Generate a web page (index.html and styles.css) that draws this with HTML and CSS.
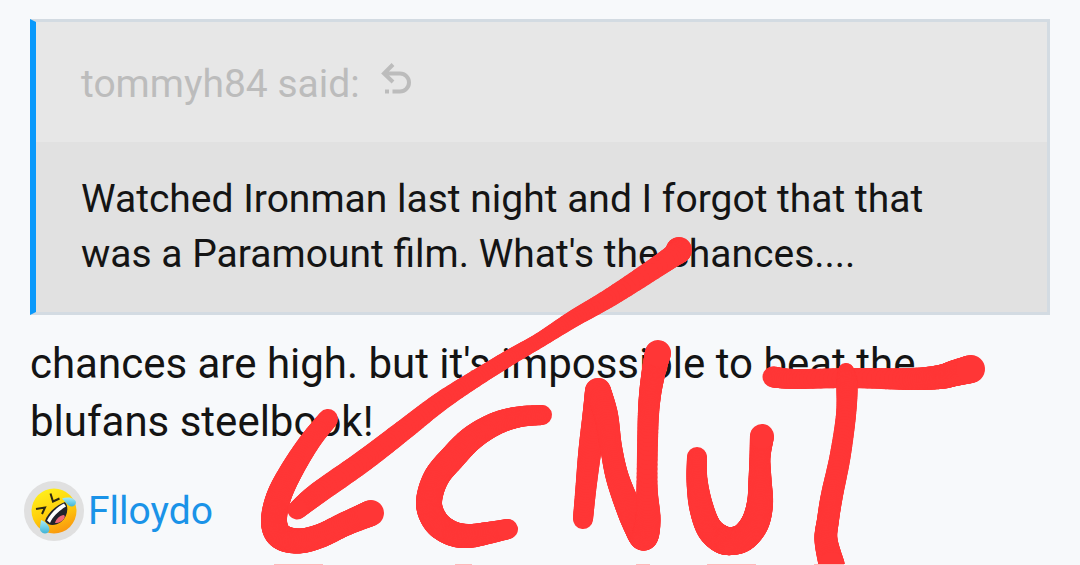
FILE: index.html
```
<!DOCTYPE html>
<html lang="en">
<head>
    <meta charset="UTF-8">
    <meta name="viewport" content="width=device-width, initial-scale=1.0">
    <title>Forum post</title>
    <link rel="stylesheet" href="styles.css">
</head>
<body>
    <article class="post">
        <blockquote class="quote">
            <div class="quote-title">
                <a href="#source">tommyh84 said:
                    <svg class="quote-icon" viewBox="0 0 30 34" aria-hidden="true">
                        <path d="M12 1.5 L3 10.5 L12 19 M3.5 10.5 H19 A9 9 0 0 1 19 28.5 H11.5"/>
                        <path class="dot" d="M4 26.5 H8 V30.5 H4 Z"/>
                    </svg>
                </a>
            </div>
            <div class="quote-content">Watched Ironman last night and I forgot that that was a Paramount film. What's the chances....</div>
        </blockquote>

        <p class="message">chances are high. but it's impossible to beat the blufans steelbook!</p>

        <div class="reactions">
            <span class="reaction-icon">
                <svg viewBox="0 0 60 60" aria-hidden="true">
                    <defs>
                        <linearGradient id="face" x1="0.3" y1="0" x2="0.7" y2="1">
                            <stop offset="0" stop-color="#fff01c"/>
                            <stop offset="0.5" stop-color="#ffd00b"/>
                            <stop offset="1" stop-color="#f9930f"/>
                        </linearGradient>
                        <linearGradient id="tear" x1="0" y1="0" x2="0" y2="1">
                            <stop offset="0" stop-color="#a5ecfb"/>
                            <stop offset="1" stop-color="#41b4d6"/>
                        </linearGradient>
                    </defs>
                    <circle cx="30" cy="30" r="22.5" fill="url(#face)"/>
                    <path d="M26.5 12.5 L29 20.5 L35.5 17.5 M12 28 L21 26.5 L18 33" fill="none" stroke="#2c2814" stroke-width="2"/>
                    <path d="M41 21 C45 26 44 35 37 41 C31 45 24 45 21 40 C23 33 32 24 41 21 Z" fill="#20222b"/>
                    <path d="M40 22.5 L42 25.5 C36 29 29 35 26 42 L23 39.5 C26 33 33 26 40 22.5 Z" fill="#fff"/>
                    <path d="M40 34 C43 36 37 43 31 42 C32 38 36 34 40 34 Z" fill="#ee6678"/>
                    <path d="M38 17.5 C44 15 51 17 52 21 C52 26 46 27 43 23 Z" fill="url(#tear)"/>
                    <path d="M17 39 C23 41 28 48 24 51.5 C20 54 15 51 16 46 Z" fill="url(#tear)"/>
                </svg>
            </span>
            <a class="reaction-user" href="#reactions">Flloydo</a>
        </div>

        <svg class="ink" id="ink" viewBox="0 0 1080 564" aria-hidden="true"></svg>
        <svg class="ink-edge" viewBox="0 0 1080 565" aria-hidden="true">
            <path d="M274 564.5 H323 M455 564.5 H472 M636 564.5 H650 M707 564.5 H756 M814 564.5 H844"/>
        </svg>
    </article>

    <script src="ink.js"></script>
</body>
</html>
```
FILE: styles.css
```
* { margin: 0; padding: 0; box-sizing: border-box; }
body { font-family: Roboto, "Liberation Sans", sans-serif; background: #f7f9fb; color: #141414; }
a { color: inherit; text-decoration: none; }

.post { position: relative; padding: 19px 30px 24px; overflow: hidden; }

.quote { background: #e1e1e1; border: 3px solid #d3dbe2; border-left: 6px solid #0a99fb; font-size: 39px; line-height: 55px; }
.quote-title { padding: 35px 45px 30px; background: #e7e7e7; color: #bcbcbc; }
.quote-content { padding: 30px 45px; }
.quote-icon { width: 30px; height: 34px; margin-left: 12px; fill: none; stroke: #bcbcbc; stroke-width: 4; }
.quote-icon .dot { fill: #bcbcbc; stroke: none; }

.message { margin-top: 20px; font-size: 42px; line-height: 58px; }

.reactions { display: flex; align-items: center; gap: 4px; margin: 30px 0 0 -6px; font-size: 39px; color: #1a93e8; }
.reaction-icon { width: 60px; height: 60px; border-radius: 50%; background: #e0e0e0; }
.reaction-icon svg { display: block; }

/* pen scribble over the post */
.ink, .ink-edge { position: absolute; top: 0; left: 0; width: 1080px; fill: none; pointer-events: none; }
.ink { height: 564px; stroke: #ff3636; stroke-linecap: round; }
.ink-edge { height: 565px; stroke: #ffb9b9; }
```
FILE: ink.js
```
// Pen strokes, each point is [x, y, pen width]
const strokes = [
    [[679, 250, 26], [670, 258, 22], [614, 295, 19], [573, 319, 17], [540, 340, 15], [509, 358, 16], [475, 379, 17], [440, 402, 19], [400, 433, 21], [362, 462, 22], [318, 493, 22], [297, 510, 19]],
    [[328, 419, 20], [311, 440, 21], [293, 468, 23], [279, 496, 25], [274, 521, 26], [280, 536, 26], [298, 541, 25], [320, 536, 24], [345, 524, 24], [371, 513, 26]],
    [[542, 415, 20], [518, 417, 21], [495, 424, 23], [472, 438, 25], [453, 457, 26], [436, 478, 26], [429, 503, 26], [436, 522, 26], [451, 533, 25], [468, 536, 24], [488, 533, 22], [508, 529, 20]],
    [[583, 519, 20], [586, 487, 21], [590, 450, 23], [595, 415, 25], [598, 391, 26]],
    [[598, 391, 26], [606, 415, 24], [611, 447, 22], [617, 476, 23], [627, 504, 25], [636, 525, 26], [644, 537, 27], [648, 519, 25], [647, 485, 21], [648, 425, 21], [650, 395, 22], [654, 370, 24], [658, 353, 26]],
    [[697, 457, 20], [697, 480, 21], [701, 506, 24], [709, 528, 26], [721, 539, 28], [732, 541, 28], [744, 537, 28], [755, 523, 28], [760, 503, 26], [760, 480, 23], [760, 457, 21], [762, 436, 24]],
    [[773, 377, 21], [796, 379, 20], [850, 378, 20], [910, 379, 22], [940, 377, 24], [955, 373, 26], [971, 369, 28]],
    [[846, 371, 16], [847, 385, 21], [846, 415, 20], [840, 457, 21], [832, 495, 22], [828, 520, 22], [826, 540, 23], [832, 566, 26]]
];

const SVG_NS = 'http://www.w3.org/2000/svg';
const STEPS = 14;

// Catmull-Rom between b and c
function spline(a, b, c, d, t) {
    return 0.5 * (2 * b + (c - a) * t + (2 * a - 5 * b + 4 * c - d) * t * t + (3 * b - a - 3 * c + d) * t * t * t);
}

function drawStroke(svg, points) {
    let last = points[0];
    for (let i = 0; i < points.length - 1; i++) {
        const a = points[Math.max(i - 1, 0)];
        const b = points[i];
        const c = points[i + 1];
        const d = points[Math.min(i + 2, points.length - 1)];
        for (let s = 1; s <= STEPS; s++) {
            const next = [0, 1, 2].map(k => spline(a[k], b[k], c[k], d[k], s / STEPS));
            const line = document.createElementNS(SVG_NS, 'line');
            line.setAttribute('x1', last[0]);
            line.setAttribute('y1', last[1]);
            line.setAttribute('x2', next[0]);
            line.setAttribute('y2', next[1]);
            line.setAttribute('stroke-width', (last[2] + next[2]) / 2);
            svg.appendChild(line);
            last = next;
        }
    }
}

strokes.forEach(points => drawStroke(document.getElementById('ink'), points));
```
